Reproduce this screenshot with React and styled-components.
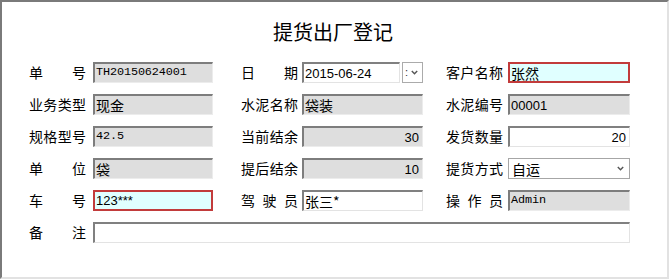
import React from 'react';
import styled, { createGlobalStyle, css } from 'styled-components';

const Global = createGlobalStyle`
  html, body { margin: 0; padding: 0; background: #fff; }
  body { font-family: "Noto Sans CJK SC", "Liberation Sans", sans-serif; color: #000; }
`;

const Frame = styled.div`
  box-sizing: border-box;
  width: 669px;
  height: 279px;
  border-top: 2px solid #7a7a7a;
  border-left: 2px solid #7a7a7a;
  border-right: 2px solid #e2e2e2;
  border-bottom: 2px solid #e2e2e2;
  background: #fff;
`;

const Title = styled.h1`
  margin: 18px 0 0;
  padding-right: 3px;
  text-align: center;
  font: 400 20px/24px "Noto Sans CJK SC", sans-serif;
  color: #000;
`;

const Form = styled.div`
  display: flex;
  flex-direction: column;
  gap: 11px;
  margin: 18px 0 0 27px;
`;

const Row = styled.div`
  display: grid;
  grid-template-columns: 212px 205px 184px;
`;

const Group = styled.div`
  display: grid;
  grid-template-columns: ${p => p.$label}px ${p => p.$field}px;
  align-items: center;
  ${p => p.$full && css`grid-column: 1 / -1;`}
`;

const Label = styled.span`
  display: block;
  width: 57px;
  font: 400 14px/21px "Noto Sans CJK SC", sans-serif;
  text-align: justify;
  text-align-last: justify;
  color: #000;
`;

const variants = {
  gray: css`
    background: #dedede;
    border-top: 2px solid #7d7d7d;
    border-left: 2px solid #7d7d7d;
    border-right: 1px solid #ececec;
    border-bottom: 1px solid #ececec;
  `,
  white: css`
    background: #fff;
    border-top: 2px solid #808080;
    border-left: 2px solid #808080;
    border-right: 1px solid #e3e3e3;
    border-bottom: 1px solid #e3e3e3;
  `,
  cyan: css`
    background: #e0ffff;
    border: 2px solid #c23b3b;
  `,
  select: css`
    background: #fff;
    border: 1px solid #a6a6a6;
    padding-left: 3px;
    padding-right: 5px;
  `,
};

const fonts = {
  mono: css`font: 400 11.8px/1 "Liberation Mono", monospace; letter-spacing: -0.1px;`,
  cjk: css`font: 400 14px/1 "Noto Sans CJK SC", sans-serif;`,
  sans: css`font: 400 13px/1 "Liberation Sans", "Noto Sans CJK SC", sans-serif;`,
};

const Field = styled.div`
  box-sizing: border-box;
  height: 21px;
  display: flex;
  align-items: center;
  justify-content: ${p => (p.$right ? 'flex-end' : 'flex-start')};
  padding: 0 3px 0 1px;
  color: #000;
  white-space: nowrap;
  overflow: hidden;
  ${p => fonts[p.$font || 'sans']}
  ${p => variants[p.$variant || 'white']}
`;

const DateWrap = styled.div`
  display: flex;
  gap: 2px;
  height: 21px;
`;

const DateInput = styled(Field)`
  width: 98px;
`;

const DropButton = styled.div`
  box-sizing: border-box;
  width: 21px;
  height: 21px;
  border: 1px solid #ababab;
  background: #fff;
  display: flex;
  align-items: center;
  gap: 3px;
  padding-left: 2px;
  font: 400 11px/1 "Liberation Sans", sans-serif;
  color: #333;
`;

const Spacer = styled.span`
  flex: 1;
`;

const Chevron = () => (
  <svg width="7" height="5" viewBox="0 0 7 5">
    <polyline points="0.8,1 3.5,3.8 6.2,1" fill="none" stroke="#555" strokeWidth="1.4" />
  </svg>
);

const cols = [
  { label: 64, field: 120 },
  { label: 61, field: 121 },
  { label: 62, field: 122 },
];

const rows = [
  [
    { label: '单 号', value: 'TH20150624001', variant: 'gray', font: 'mono' },
    { label: '日 期', type: 'date', value: '2015-06-24' },
    { label: '客户名称', value: '张然', variant: 'cyan', font: 'cjk' },
  ],
  [
    { label: '业务类型', value: '现金', variant: 'gray', font: 'cjk' },
    { label: '水泥名称', value: '袋装', variant: 'gray', font: 'cjk' },
    { label: '水泥编号', value: '00001', variant: 'gray' },
  ],
  [
    { label: '规格型号', value: '42.5', variant: 'gray', font: 'mono' },
    { label: '当前结余', value: '30', variant: 'gray', right: true },
    { label: '发货数量', value: '20', variant: 'white', right: true },
  ],
  [
    { label: '单 位', value: '袋', variant: 'gray', font: 'cjk' },
    { label: '提后结余', value: '10', variant: 'gray', right: true },
    { label: '提货方式', type: 'select', value: '自运', font: 'cjk' },
  ],
  [
    { label: '车 号', value: '123***', variant: 'cyan' },
    { label: '驾 驶 员', value: '张三*', variant: 'white', font: 'cjk' },
    { label: '操 作 员', value: 'Admin', variant: 'gray', font: 'mono' },
  ],
];

function renderControl(item) {
  if (item.type === 'date') {
    return (
      <DateWrap>
        <DateInput $variant="white">{item.value}</DateInput>
        <DropButton>
          <span>:</span>
          <Chevron />
        </DropButton>
      </DateWrap>
    );
  }
  if (item.type === 'select') {
    return (
      <Field $variant="select" $font={item.font}>
        {item.value}
        <Spacer />
        <Chevron />
      </Field>
    );
  }
  return (
    <Field $variant={item.variant} $font={item.font} $right={item.right}>
      {item.value}
    </Field>
  );
}

export default function App() {
  return (
    <>
      <Global />
      <Frame>
        <Title>提货出厂登记</Title>
        <Form>
          {rows.map((row, ri) => (
            <Row key={ri}>
              {row.map((item, ci) => (
                <Group key={ci} $label={cols[ci].label} $field={cols[ci].field}>
                  <Label>{item.label}</Label>
                  {renderControl(item)}
                </Group>
              ))}
            </Row>
          ))}
          <Row>
            <Group $full $label={64} $field={537}>
              <Label>备 注</Label>
              <Field $variant="white" />
            </Group>
          </Row>
        </Form>
      </Frame>
    </>
  );
}
